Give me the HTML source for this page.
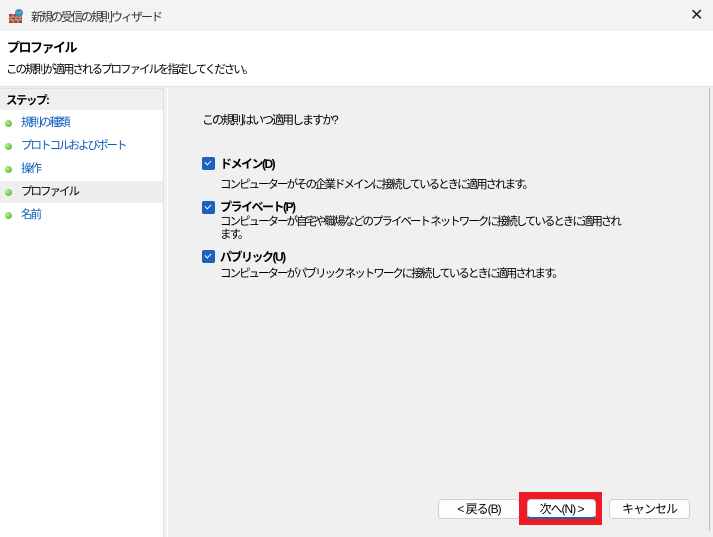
<!DOCTYPE html>
<html><head><meta charset="utf-8"><style>
*{margin:0;padding:0;box-sizing:border-box}
body{width:713px;height:537px;overflow:hidden;background:#f0f0f0;font-family:"Liberation Sans","Noto Sans CJK JP",sans-serif;font-size:12px;color:#000;position:relative;letter-spacing:-2px}
.abs{position:absolute;white-space:nowrap}
#title{left:0;top:0;width:713px;height:31px;background:#f3f3f3}
#hdr{left:0;top:31px;width:713px;height:56px;background:#fff;border-bottom:1px solid #e3e3e3}
#left{left:0;top:88px;width:164px;height:449px;background:#fff;border-right:1px solid #e0e0e0;border-top:1px solid #e0e0e0}
#right{left:167px;top:88px;width:540px;height:449px;background:#f0f0f0;border-left:1px solid #fff}
#edge{left:709px;top:88px;width:1px;height:443px;background:#bbb}
.step{left:0;width:163px;height:22px;padding-left:21px;line-height:22px;color:#0a5cb8;font-size:11.5px}
.dot{position:absolute;left:5px;top:8px;width:7px;height:7px;border-radius:50%;background:radial-gradient(circle at 35% 35%,#b8f08a,#3fa626)}
.cb{position:absolute;width:13px;height:13px;background:#1a61c0;border-radius:2px}
.cb:after{content:"";position:absolute;left:3px;top:3px;width:5px;height:3px;border-left:1.5px solid #fff;border-bottom:1.5px solid #fff;transform:rotate(-45deg)}
.btn{position:absolute;height:20px;background:#fdfdfd;border:1px solid #d0d0d0;border-radius:4px;text-align:center;line-height:18px;font-size:12px}
.d{font-size:11.5px}
.b{font-weight:bold;letter-spacing:-1.5px}
</style></head><body>
<div class="abs" id="title"></div>
<svg class="abs" style="left:8px;top:8px" width="16" height="16" viewBox="0 0 16 16"><rect x="1" y="6" width="13" height="9" fill="#a0462e"/><path d="M1 9h13M1 12h13M5 6v3M10 6v3M3 9v3M8 9v3M12 9v3M5 12v3M10 12v3" stroke="#e8c0a8" stroke-width=".8"/><circle cx="11" cy="5" r="4" fill="#3a8ad8"/><path d="M8 4q3 2 6 0" stroke="#6cc040" stroke-width="1.5" fill="none"/></svg>
<div class="abs" style="left:31px;top:8px;font-size:12px;color:#333">新規の受信の規則ウィザード</div>
<div class="abs" style="left:690px;top:5px;font-size:16px;color:#222;letter-spacing:0">✕</div>
<div class="abs" id="hdr"></div>
<div class="abs b" style="left:7px;top:37px;font-size:13px">プロファイル</div>
<div class="abs d" style="left:6px;top:61px">この規則が適用されるプロファイルを指定してください。</div>
<div class="abs" id="left"></div>
<div class="abs" style="left:0;top:89px;width:163px;height:21px;background:#efefef"></div>
<div class="abs b" style="left:6px;top:92px;font-size:11.5px">ステップ:</div>
<div class="abs step" style="top:112px"><span class="dot"></span>規則の種類</div>
<div class="abs step" style="top:135px"><span class="dot"></span>プロトコルおよびポート</div>
<div class="abs step" style="top:158px"><span class="dot"></span>操作</div>
<div class="abs step" style="top:181px;background:#eeeeee;color:#000"><span class="dot"></span>プロファイル</div>
<div class="abs step" style="top:204px"><span class="dot"></span>名前</div>
<div class="abs" id="right"></div>
<div class="abs" id="edge"></div>
<div class="abs" style="left:202px;top:111px">この規則はいつ適用しますか?</div>
<div class="cb" style="left:202px;top:157px"></div>
<div class="abs b" style="left:220px;top:155px">ドメイン(D)</div>
<div class="abs d" style="left:220px;top:176px">コンピューターがその企業ドメインに接続しているときに適用されます。</div>
<div class="cb" style="left:202px;top:201px"></div>
<div class="abs b" style="left:220px;top:198px">プライベート(P)</div>
<div class="abs d" style="left:220px;top:216px;line-height:13px">コンピューターが自宅や職場などのプライベート ネットワークに接続しているときに適用され<br>ます。</div>
<div class="cb" style="left:202px;top:250px"></div>
<div class="abs b" style="left:220px;top:248px">パブリック(U)</div>
<div class="abs d" style="left:220px;top:265px">コンピューターがパブリック ネットワークに接続しているときに適用されます。</div>
<div class="btn" style="left:438px;top:499px;width:82px;letter-spacing:-1px">&lt; 戻る(B)</div>
<div class="abs" style="left:519px;top:492px;width:83px;height:33px;background:#ed1c24"></div>
<div class="btn" style="left:527px;top:499px;width:69px;background:#fff;border-bottom:2px solid #1a61c0;letter-spacing:-1px">次へ(N) &gt;</div>
<div class="btn" style="left:609px;top:499px;width:81px;letter-spacing:-1px">キャンセル</div>
</body></html>
